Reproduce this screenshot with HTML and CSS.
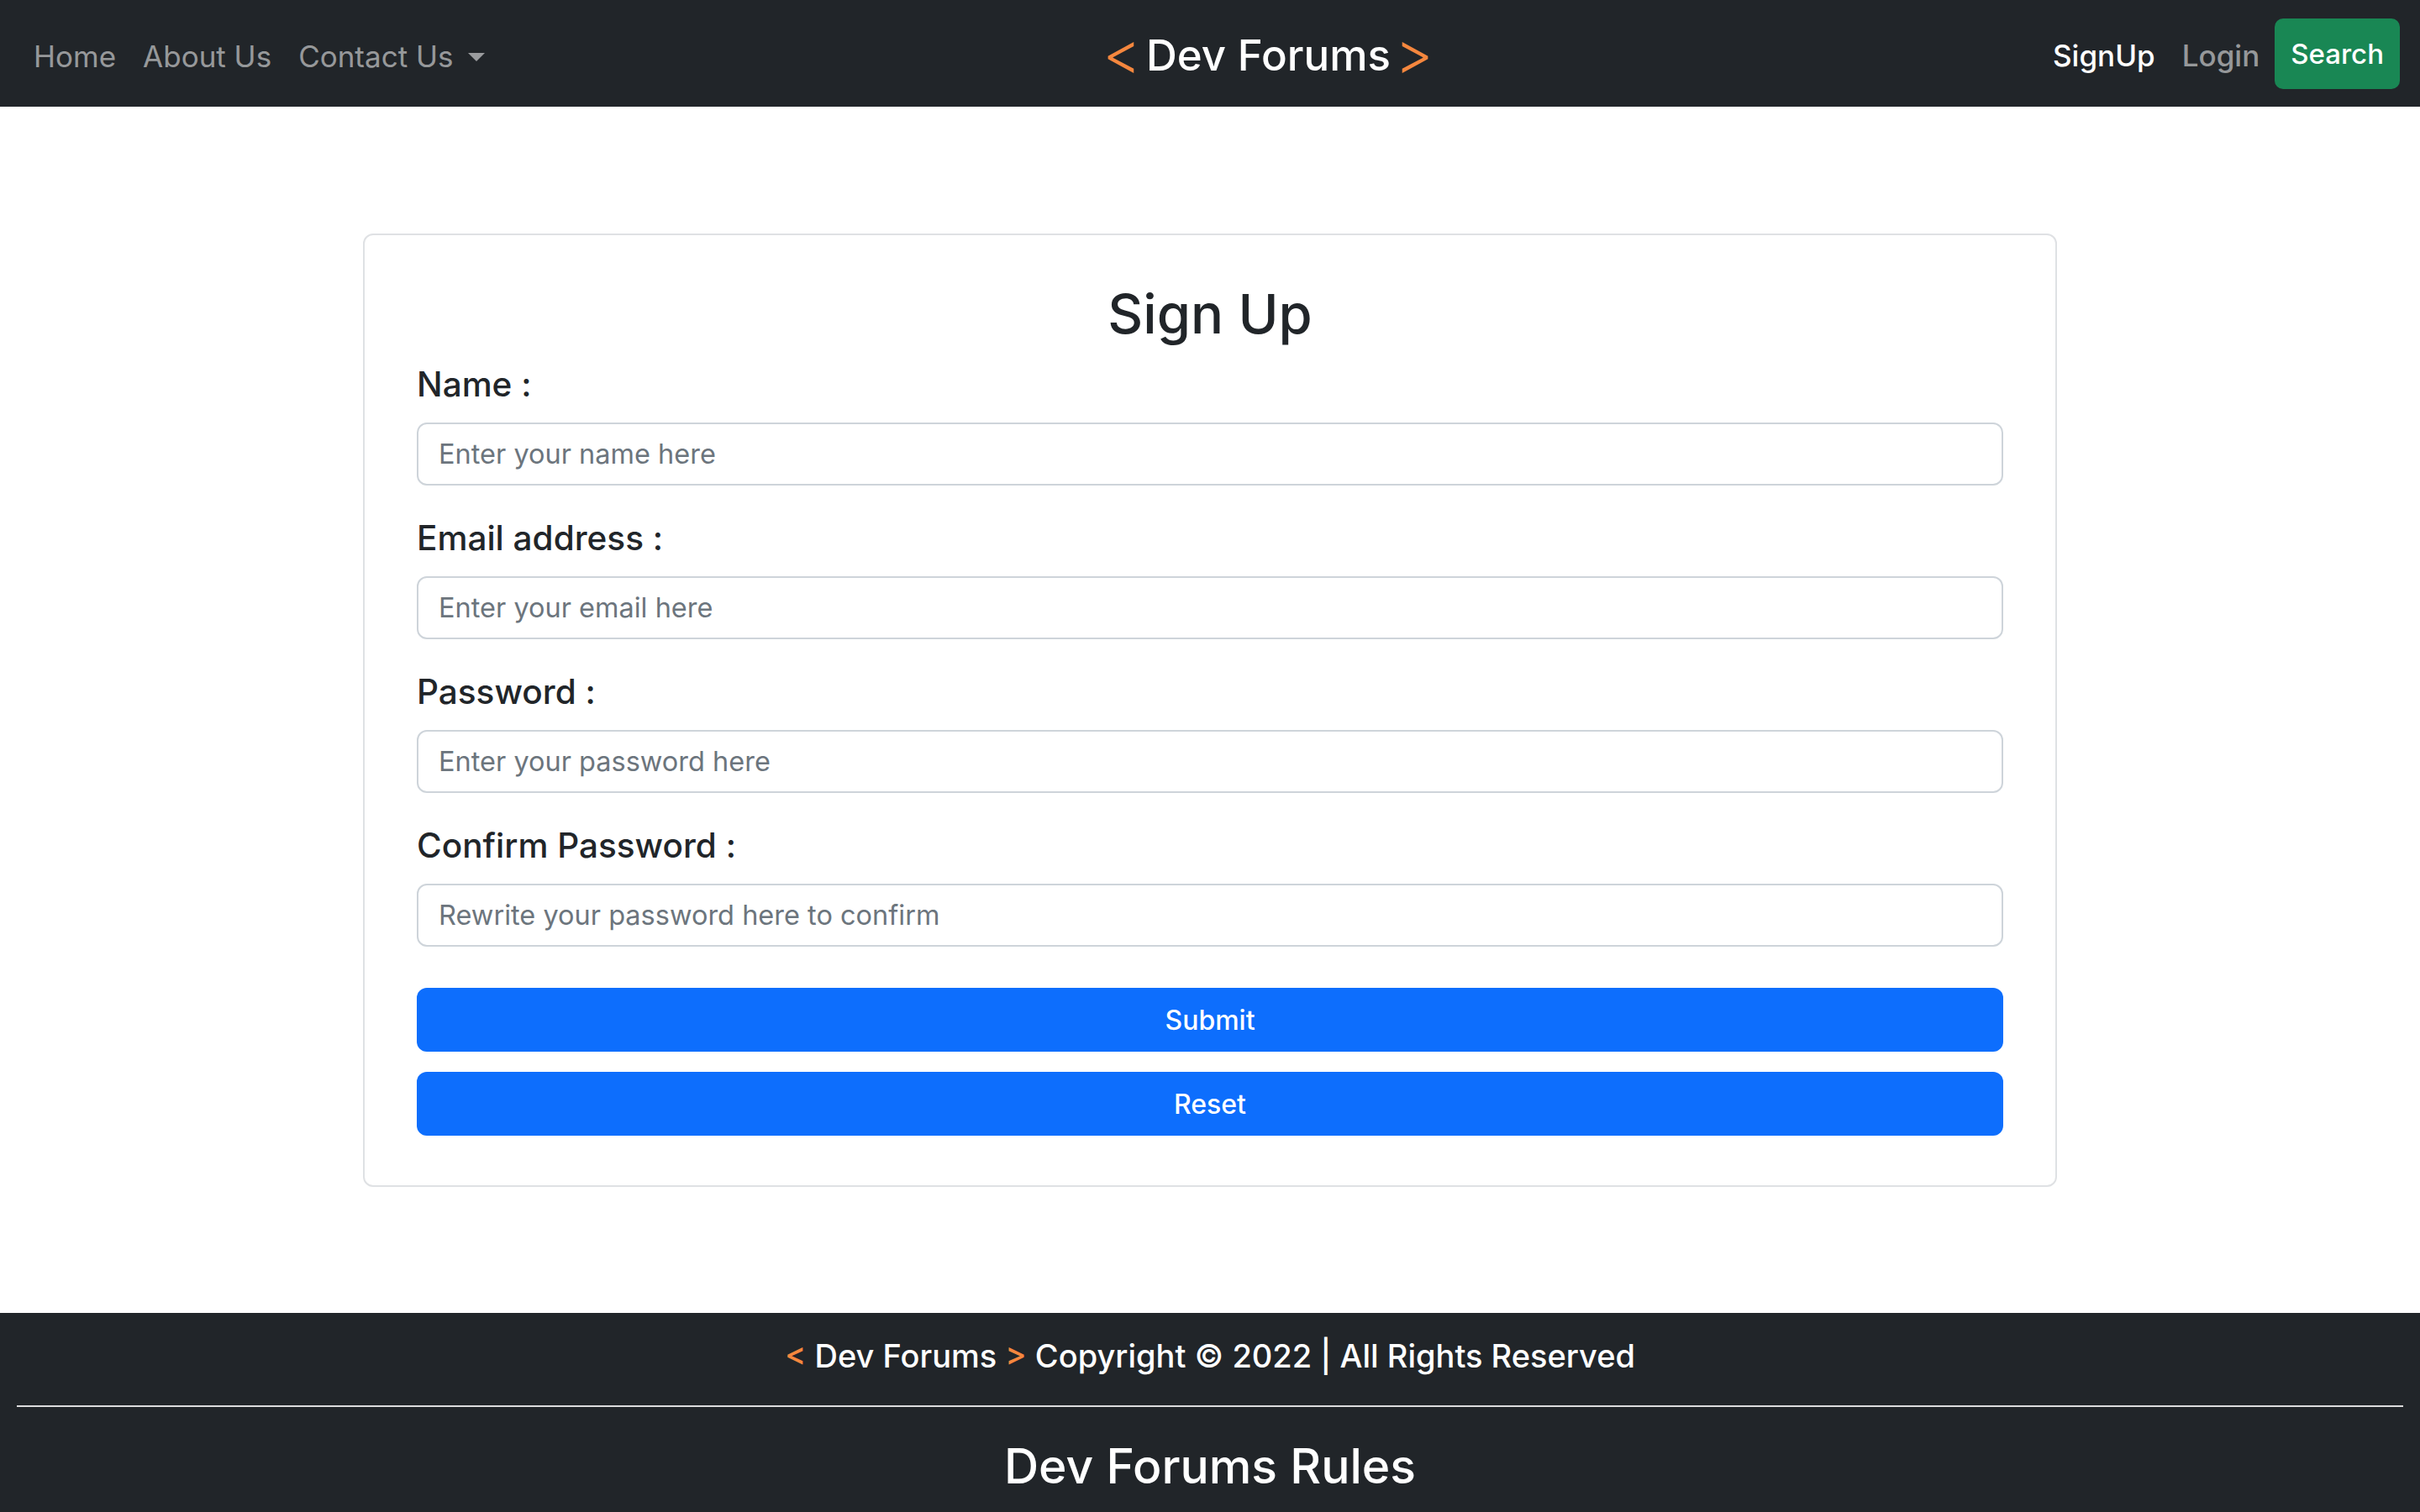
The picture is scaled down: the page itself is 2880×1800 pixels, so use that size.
FILE: index.html
```html
<!DOCTYPE html>
<html lang="en">
<head>
<meta charset="utf-8">
<title>Dev Forums - Sign Up</title>
<link rel="stylesheet" href="styles.css">
</head>
<body>
<header class="navbar">
  <nav class="nav-left">
    <a class="nav-link" href="#">Home</a>
    <a class="nav-link" href="#">About Us</a>
    <a class="nav-link dropdown" href="#">Contact Us</a>
  </nav>
  <a class="brand" href="#"><span class="bracket bracket-l">&lt;</span>Dev Forums<span class="bracket bracket-r">&gt;</span></a>
  <div class="nav-right">
    <a class="nav-link active" href="#">SignUp</a>
    <a class="nav-link" href="#">Login</a>
    <button class="btn-search" type="button">Search</button>
  </div>
</header>

<main class="main">
  <form class="card">
    <h2 class="title">Sign Up</h2>
    <div class="field">
      <label for="name">Name :</label>
      <input id="name" type="text" placeholder="Enter your name here">
    </div>
    <div class="field">
      <label for="email">Email address :</label>
      <input id="email" type="email" placeholder="Enter your email here">
    </div>
    <div class="field">
      <label for="pass">Password :</label>
      <input id="pass" type="password" placeholder="Enter your password here">
    </div>
    <div class="field">
      <label for="cpass">Confirm Password :</label>
      <input id="cpass" type="password" placeholder="Rewrite your password here to confirm">
    </div>
    <div class="actions">
      <button class="btn-primary" type="submit">Submit</button>
      <button class="btn-primary" type="reset">Reset</button>
    </div>
  </form>
</main>

<footer class="footer">
  <p class="copyright"><span class="orange">&lt;</span> Dev Forums <span class="orange">&gt;</span> Copyright © 2022 | All Rights Reserved</p>
  <hr class="divider">
  <h3 class="rules">Dev Forums Rules</h3>
</footer>
</body>
</html>
```

FILE: styles.css
```css
html {
  background: #212529;
}
body {
  margin: 0;
  font-family: Inter, "Liberation Sans", sans-serif;
  color: #212529;
  background: #212529;
}

/* NAVBAR */
.navbar {
  display: flex;
  align-items: center;
  height: 127px;
  padding: 0 24px;
  background: #212529;
  box-sizing: border-box;
}
.nav-left,
.nav-right {
  flex: 1 1 0;
  display: flex;
  align-items: center;
}
.nav-right {
  justify-content: flex-end;
}
.nav-link {
  padding: 6px 16px 0;
  font-size: 35px;
  line-height: 52px;
  color: rgba(255, 255, 255, 0.55);
  text-decoration: none;
}
.nav-right .nav-link {
  font-weight: 500;
  padding-top: 4px;
}
.nav-link.active {
  color: #fff;
}
.dropdown::after {
  content: "";
  display: inline-block;
  margin-left: 18px;
  vertical-align: 7px;
  border-top: 10px solid;
  border-left: 10px solid transparent;
  border-right: 10px solid transparent;
}
.brand {
  margin-left: 138px;
  padding-top: 4px;
  font-size: 51px;
  font-weight: 500;
  color: #fff;
  text-decoration: none;
  white-space: nowrap;
  line-height: 60px;
}
.bracket {
  color: #f5873e;
  font-size: 70px;
  font-weight: 300;
  vertical-align: -4px;
  line-height: 0;
}
.bracket-l {
  margin-right: 6px;
}
.bracket-r {
  margin-left: 5px;
}
.btn-search {
  margin-left: 2px;
  height: 84px;
  padding: 0 19px;
  background: #198754;
  color: #fff;
  border: 0;
  border-radius: 10px;
  font-family: inherit;
  font-size: 33px;
  font-weight: 500;
}

/* MAIN */
.main {
  background: #fff;
  display: flex;
  justify-content: center;
  padding: 151px 0 150px;
}
.card {
  width: 2016px;
  box-sizing: border-box;
  border: 2px solid #dfe1e4;
  border-radius: 12px;
  padding: 55px 62px 59px;
  margin: 0;
}
.title {
  margin: 0 0 14px;
  font-size: 65px;
  font-weight: 500;
  line-height: 1.2;
  text-align: center;
}
.field {
  margin-bottom: 32px;
}
.field label {
  display: block;
  font-size: 40.5px;
  font-weight: 500;
  line-height: 60px;
  padding-top: 1px;
  margin-bottom: 15px;
}
.field input {
  display: block;
  width: 100%;
  box-sizing: border-box;
  height: 75px;
  padding: 0 24px;
  margin: 0;
  font-family: inherit;
  font-size: 32.5px;
  color: #212529;
  background: #fff;
  border: 2px solid #ced4da;
  border-radius: 12px;
}
.field input::placeholder {
  color: #6c757d;
}
.actions {
  display: flex;
  flex-direction: column;
  gap: 24px;
  padding-top: 17px;
}
.btn-primary {
  display: block;
  width: 100%;
  height: 76px;
  margin: 0;
  background: #0d6efd;
  color: #fff;
  border: 0;
  border-radius: 12px;
  font-family: inherit;
  font-size: 32px;
  font-weight: 500;
}

/* FOOTER */
.footer {
  background: #212529;
  color: #fff;
  text-align: center;
  padding: 27px 0 17px;
}
.copyright {
  margin: 0;
  font-size: 38px;
  font-weight: 500;
  line-height: 48px;
}
.orange {
  color: #f5873e;
}
.divider {
  margin: 35px 20px 37px;
  border: 0;
  border-top: 2px solid #dcdcdc;
  height: 0;
}
.rules {
  margin: 0;
  font-size: 57px;
  font-weight: 500;
  line-height: 67px;
}
```
